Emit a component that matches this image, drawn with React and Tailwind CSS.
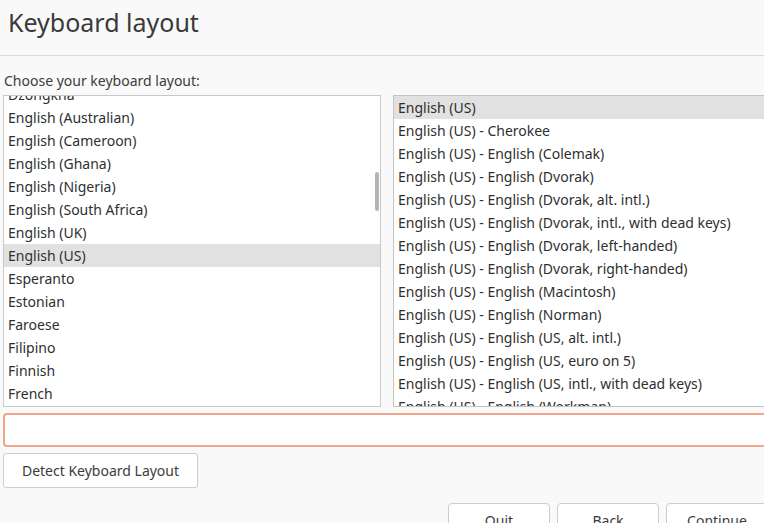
import React from 'react';

const leftItems = [
    'Dzongkha',
    'English (Australian)',
    'English (Cameroon)',
    'English (Ghana)',
    'English (Nigeria)',
    'English (South Africa)',
    'English (UK)',
    'English (US)',
    'Esperanto',
    'Estonian',
    'Faroese',
    'Filipino',
    'Finnish',
    'French',
    'Friulian',
];

const rightItems = [
    'English (US)',
    'English (US) - Cherokee',
    'English (US) - English (Colemak)',
    'English (US) - English (Dvorak)',
    'English (US) - English (Dvorak, alt. intl.)',
    'English (US) - English (Dvorak, intl., with dead keys)',
    'English (US) - English (Dvorak, left-handed)',
    'English (US) - English (Dvorak, right-handed)',
    'English (US) - English (Macintosh)',
    'English (US) - English (Norman)',
    'English (US) - English (US, alt. intl.)',
    'English (US) - English (US, euro on 5)',
    'English (US) - English (US, intl., with dead keys)',
    'English (US) - English (Workman)',
];

const font = { fontFamily: '"Noto Sans", "DejaVu Sans", sans-serif' };

const Row = ({ label, selected }) => (
    <div
        className={
            'h-[23px] pl-[4px] flex items-center whitespace-nowrap text-[14px] text-[#2f2f2f]' +
            (selected ? ' bg-[#e1e1e1]' : '')
        }
    >
        {label}
    </div>
);

export default function App() {
    return (
        <div
            className="w-[764px] h-[523px] overflow-hidden bg-[#f9f9f9] text-[#3c3c3c]"
            style={font}
        >
            {/* Header */}
            <div className="h-[56px] border-b border-[#dadada] pl-[8px] pt-[2px]">
                <h1 className="text-[25px] leading-[40px] text-[#3a3a3a]">Keyboard layout</h1>
            </div>

            <div className="px-[3px]">
                <div className="pl-[1px] pt-[15px] h-[39px] text-[14px] leading-[20px] text-[#3c3c3c]">
                    Choose your keyboard layout:
                </div>

                {/* Lists */}
                <div className="flex gap-[12px] w-[900px]">
                    <div className="relative w-[378px] h-[312px] flex-none bg-white border border-[#c9c9c9] overflow-hidden">
                        <div className="mt-[-13px]">
                            {leftItems.map((item) => (
                                <Row key={item} label={item} selected={item === 'English (US)'} />
                            ))}
                        </div>
                        {/* scrollbar */}
                        <div className="absolute right-[1px] top-[76px] w-[4px] h-[39px] rounded-full bg-[#b4b4b4]" />
                    </div>

                    <div className="w-[420px] h-[312px] flex-none bg-white border border-[#c4c4c4] overflow-hidden">
                        {rightItems.map((item, i) => (
                            <Row key={item} label={item} selected={i === 0} />
                        ))}
                    </div>
                </div>

                {/* Entry */}
                <div className="mt-[6px] w-[820px] h-[34px] bg-white border-2 border-[#f2a68b] rounded-[4px]" />

                {/* Detect button */}
                <button className="mt-[6px] w-[195px] h-[35px] bg-white border border-[#cdcdcd] rounded-[3px] text-[14px] text-[#3c3c3c]">
                    Detect Keyboard Layout
                </button>

                {/* Navigation */}
                <div className="mt-[15px] flex gap-[7px] pl-[445px] w-[900px]">
                    <button className="w-[102px] h-[36px] flex-none bg-white border border-[#cdcdcd] rounded-[4px] text-[14px] text-[#3c3c3c] pb-[2px]">
                        Quit
                    </button>
                    <button className="w-[102px] h-[36px] flex-none bg-white border border-[#cdcdcd] rounded-[4px] text-[14px] text-[#3c3c3c] pb-[2px]">
                        Back
                    </button>
                    <button className="w-[102px] h-[36px] flex-none bg-white border border-[#cdcdcd] rounded-[4px] text-[14px] text-[#3c3c3c] pb-[2px]">
                        Continue
                    </button>
                </div>
            </div>
        </div>
    );
}
